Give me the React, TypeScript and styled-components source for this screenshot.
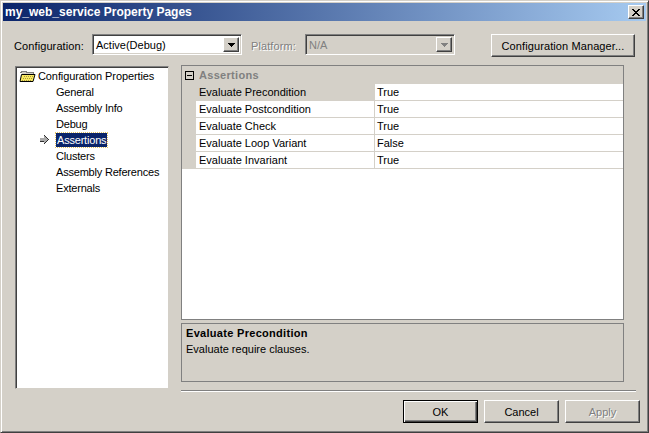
import React from "react";
import styled, { createGlobalStyle } from "styled-components";

const Global = createGlobalStyle`
  html, body { margin: 0; padding: 0; background: #d4d0c8; }
  * { box-sizing: border-box; }
`;

const bevelOut = `
  border: 1px solid; border-color: #fff #404040 #404040 #fff;
  box-shadow: inset -1px -1px 0 #808080;
`;

const Win = styled.div`
  width: 649px; height: 433px; background: #d4d0c8; overflow: hidden;
  font-family: "Liberation Sans", Arial, sans-serif; font-size: 11px; color: #000;
  border-style: solid; border-width: 1px; border-color: #d4d0c8 #404040 #404040 #d4d0c8;
  box-shadow: inset 1px 1px 0 #fff, inset -1px -1px 0 #808080;
  padding: 2px 2px 0 2px;
  display: flex; flex-direction: column;
`;
const TitleBar = styled.div`
  height: 18px; flex: none; padding: 0 2px 0 2px;
  background: linear-gradient(90deg, #0a246a, #a6caf0);
  display: flex; align-items: center; justify-content: space-between;
`;
const TitleText = styled.div`
  color: #fff; font-weight: 700; font-size: 12px;
`;
const CloseBtn = styled.div`
  width: 16px; height: 14px; background: #d4d0c8; ${bevelOut}
  display: flex; align-items: center; justify-content: center;
  svg { display: block; }
`;
const Body = styled.div`
  flex: 1; display: flex; flex-direction: column; padding: 13px 4px 0 11px;
`;
const Toolbar = styled.div`
  display: flex; align-items: flex-start; height: 24px;
`;
const Label = styled.span<{ $w: number; $off?: boolean }>`
  width: ${p => p.$w}px; flex: none; line-height: 24px; letter-spacing: 0.1px;
  color: ${p => (p.$off ? "#808080" : "#000")};
  text-shadow: ${p => (p.$off ? "1px 1px 0 #fff" : "none")};
`;
const Combo = styled.div<{ $off?: boolean }>`
  width: 150px; height: 21px; flex: none;
  background: ${p => (p.$off ? "#d4d0c8" : "#fff")};
  color: ${p => (p.$off ? "#808080" : "#000")};
  border: 1px solid; border-color: #808080 #fff #fff #808080;
  box-shadow: inset 1px 1px 0 #404040, inset -1px -1px 0 #d4d0c8;
  padding: 2px 2px 2px 3px;
  display: flex; align-items: center; justify-content: space-between;
`;
const ComboArrow = styled.div`
  width: 16px; height: 15px; background: #d4d0c8; ${bevelOut}
  display: flex; align-items: center; justify-content: center;
  svg { display: block; }
`;
const Gap = styled.div<{ $w: number }>`
  width: ${p => p.$w}px; flex: none;
`;
const Button = styled.div<{ $w: number; $def?: boolean; $off?: boolean }>`
  width: ${p => p.$w}px; height: 23px; flex: none; background: #d4d0c8;
  display: flex; align-items: center; justify-content: center;
  color: ${p => (p.$off ? "#808080" : "#000")};
  text-shadow: ${p => (p.$off ? "1px 1px 0 #fff" : "none")};
  ${p => (p.$def
    ? `border: 1px solid #000; box-shadow: inset 1px 1px 0 #fff, inset -1px -1px 0 #404040, inset -2px -2px 0 #808080;`
    : bevelOut)}
`;
const ManagerLabel = styled.span`
  letter-spacing: 0.1px;
`;
const Main = styled.div`
  display: flex; margin-top: 7px; align-items: flex-start;
`;
const Tree = styled.div`
  width: 154px; height: 323px; margin: 1px 12px 0 1px; flex: none; background: #fff;
  border: 1px solid; border-color: #808080 #d4d0c8 #d4d0c8 #808080;
  box-shadow: inset 1px 1px 0 #404040;
  padding: 1px 0 0 3px; display: flex; flex-direction: column;
  letter-spacing: -0.2px;
`;
const TreeRoot = styled.div`
  height: 16px; display: flex; align-items: center; gap: 2px;
  letter-spacing: -0.1px;
`;
const TreeItem = styled.div`
  height: 16px; padding-left: 37px; display: flex; align-items: center; position: relative;
`;
const Selected = styled.span`
  background: #0a246a; color: #fff; padding: 0 1px; height: 14px; line-height: 14px; margin-left: 0;
  outline: 1px dotted #e0c060; outline-offset: 0;
`;
const Pointer = styled.svg`
  position: absolute; left: 21px; top: 3px;
`;
const Right = styled.div`
  width: 443px; flex: none; display: flex; flex-direction: column;
`;
const Grid = styled.div`
  height: 255px; background: #fff; border: 1px solid #808080;
  display: flex; flex-direction: column;
`;
const CatRow = styled.div`
  height: 18px; flex: none; background: #d4d0c8; display: flex; align-items: center;
  color: #808080; font-weight: 700; letter-spacing: 0.3px;
`;
const Toggle = styled.span`
  width: 9px; height: 9px; border: 1px solid #000; margin: 0 5px 0 3px; position: relative; flex: none; background: #d4d0c8;
  &::after { content: ""; position: absolute; left: 1px; right: 1px; top: 3px; height: 1px; background: #000; }
`;
const PropRow = styled.div`
  height: 17px; flex: none; display: flex; background: #d4d0c8;
`;
const PropName = styled.div<{ $sel?: boolean }>`
  width: 178px; margin-left: 14px; flex: none; padding: 0 0 0 3px; display: flex; align-items: center;
  background: ${p => (p.$sel ? "#d4d0c8" : "#fff")};
  border-bottom: 1px solid #d4d0c8;
`;
const PropValue = styled.div`
  flex: 1; padding: 0 0 0 2px; background: #fff; display: flex; align-items: center;
  border-left: 1px solid #d4d0c8; border-bottom: 1px solid #d4d0c8;
`;
const Desc = styled.div`
  height: 59px; margin-top: 3px; border: 1px solid #808080; padding: 3px 4px;
  display: flex; flex-direction: column; gap: 4px;
`;
const DescTitle = styled.div`font-weight: 700; letter-spacing: 0.3px;`;
const Separator = styled.div`
  width: 455px; height: 2px; margin-top: 8px; background: #fff; border-top: 1px solid #808080;
`;
const Footer = styled.div`
  display: flex; justify-content: flex-end; gap: 6px; padding-right: 2px; margin-top: 8px;
`;

const Arrow = ({ color }: { color: string }) => (
  <svg width="7" height="4" viewBox="0 0 7 4" shapeRendering="crispEdges">
    <path d="M0 0h7v1H0zM1 1h5v1H1zM2 2h3v1H2zM3 3h1v1H3z" fill={color} />
  </svg>
);

const Folder = () => (
  <svg width="17" height="12" viewBox="0 0 17 12" shapeRendering="crispEdges">
    <path d="M1 2h1V1h5v1h7v2H1z" fill="#d4d0c8" stroke="#808080" strokeWidth="1" />
    <path d="M1 3h2v8H1z" fill="#fff" />
    <path d="M2.500 4.500h13.500l-2 7H1z" fill="#f8e860" stroke="#000" strokeWidth="1" shapeRendering="auto" />
    <path d="M5 6h1v1H5zM7 6h1v1H7zM9 6h1v1H9zM11 6h1v1h-1zM13 6h1v1h-1zM4 8h1v1H4zM6 8h1v1H6zM8 8h1v1H8zM10 8h1v1h-1zM12 8h1v1h-1zM3 10h1v1H3zM5 10h1v1H5zM7 10h1v1H7zM9 10h1v1H9zM11 10h1v1h-1z" fill="#a89a40" />
  </svg>
);

const rows = [
  ["Evaluate Precondition", "True"],
  ["Evaluate Postcondition", "True"],
  ["Evaluate Check", "True"],
  ["Evaluate Loop Variant", "False"],
  ["Evaluate Invariant", "True"],
];
const items = ["General", "Assembly Info", "Debug", "Assertions", "Clusters", "Assembly References", "Externals"];

export default function App() {
  return (
    <Win>
      <Global />
      <TitleBar>
        <TitleText>my_web_service Property Pages</TitleText>
        <CloseBtn>
          <svg width="8" height="7" viewBox="0 0 8 7" shapeRendering="crispEdges">
            <path d="M0 0h2v1h1v1h2V1h1V0h2v1H7v1H6v1H5v1h1v1h1v1h1v1H6V6H5V5H3v1H2v1H0V6h1V5h1V4h1V3H2V2H1V1H0z" fill="#000" />
          </svg>
        </CloseBtn>
      </TitleBar>
      <Body>
        <Toolbar>
          <Label $w={78}>Configuration:</Label>
          <Combo>
            Active(Debug)
            <ComboArrow><Arrow color="#000" /></ComboArrow>
          </Combo>
          <Gap $w={9} />
          <Label $w={54} $off>Platform:</Label>
          <Combo $off>
            N/A
            <ComboArrow><Arrow color="#808080" /></ComboArrow>
          </Combo>
          <Gap $w={36} />
          <Button $w={144}><ManagerLabel>Configuration Manager...</ManagerLabel></Button>
        </Toolbar>
        <Main>
          <Tree>
            <TreeRoot><Folder />Configuration Properties</TreeRoot>
            {items.map(t => (
              <TreeItem key={t}>
                {t === "Assertions" ? (
                  <>
                    <Pointer width="10" height="10" viewBox="0 0 10 10" shapeRendering="crispEdges">
                      <path d="M0 3h4V0h1v1h1v1h1v1h1v1h1v1H8v1H7v1H6v1H5v1H4V6H0z" fill="#a8a8a8" />
                      <path d="M5 1h1v1h1v1h1v1h1v1H8v1H7v1H6v1H5V7h1V6h1V5h1V4H7V3H6V2H5zM4 0h1v1H4zM4 8h1v1H4zM0 6h4v1H0z" fill="#303030" />
                    </Pointer>
                    <Selected>{t}</Selected>
                  </>
                ) : t}
              </TreeItem>
            ))}
          </Tree>
          <Right>
            <Grid>
              <CatRow><Toggle />Assertions</CatRow>
              {rows.map(([n, v], i) => (
                <PropRow key={n}>
                  <PropName $sel={i === 0}>{n}</PropName>
                  <PropValue>{v}</PropValue>
                </PropRow>
              ))}
            </Grid>
            <Desc>
              <DescTitle>Evaluate Precondition</DescTitle>
              <div>Evaluate require clauses.</div>
            </Desc>
            <Separator />
          </Right>
        </Main>
        <Footer>
          <Button $w={75} $def>OK</Button>
          <Button $w={75}>Cancel</Button>
          <Button $w={75} $off>Apply</Button>
        </Footer>
      </Body>
    </Win>
  );
}
